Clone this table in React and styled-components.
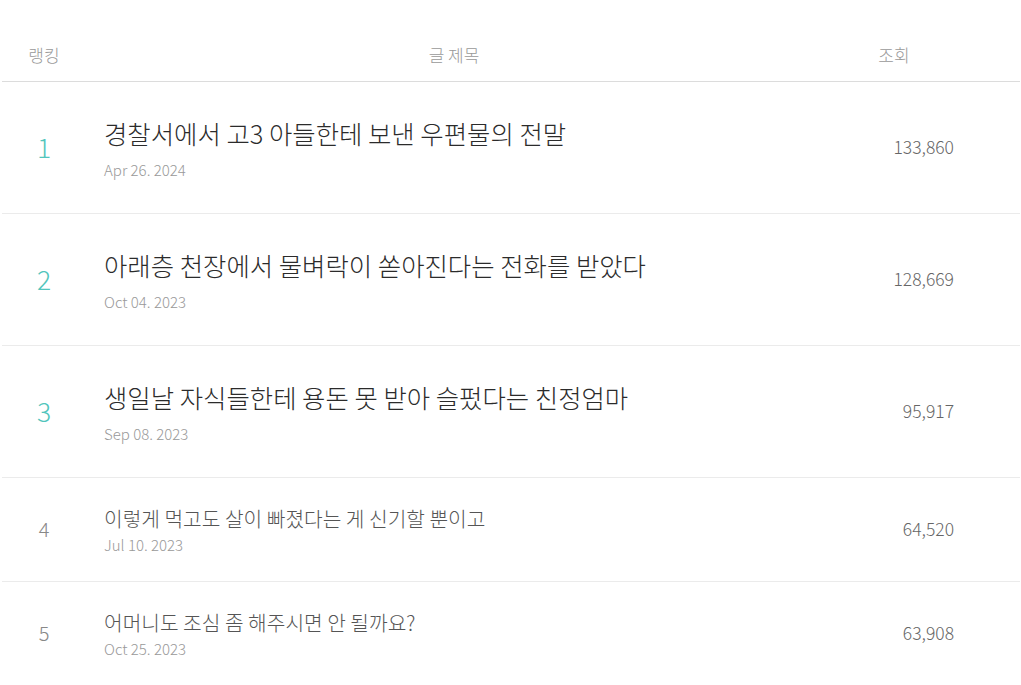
import React from 'react'
import styled, {createGlobalStyle} from 'styled-components'

const GlobalStyle = createGlobalStyle`
  html, body {
    margin: 0;
    padding: 0;
    background: #fff;
  }
  body {
    font-family: "Noto Sans CJK KR", "Noto Sans", sans-serif;
    font-weight: 300;
    color: #333;
  }
`

const Board = styled.div`
  padding: 28px 1px 0 2px;
`

const cols = `
  display: grid;
  grid-template-columns: 84px 1fr 120px 66px;
  align-items: center;
`

const HeadRow = styled.div`
  ${cols}
  height: 53px;
  border-bottom: 1px solid #dcdcdc;
  font-size: 17px;
  color: #999;
`

const HeadCell = styled.div`
  text-align: center;
  padding-right: ${p => p.$shift || 0}px;
`

const Row = styled.div`
  ${cols}
  height: ${p => (p.$top ? 131 : 103)}px;
  border-bottom: 1px solid #ebebeb;
`

const Rank = styled.div`
  text-align: center;
  font-size: ${p => (p.$top ? 26.5 : 20)}px;
  color: ${p => (p.$top ? '#52c5bc' : '#888')};
  margin-top: -2px;
`

const TitleCell = styled.div`
  padding-left: 18px;
  display: flex;
  flex-direction: column;
`

const Title = styled.div`
  font-size: ${p => (p.$top ? 25.4 : 20.3)}px;
  line-height: ${p => (p.$top ? 36 : 26)}px;
  color: ${p => (p.$top ? '#2b2b2b' : '#555')};
  margin-bottom: ${p => (p.$top ? 9 : 4)}px;
`

const Date = styled.div`
  font-size: 15px;
  line-height: 20px;
  color: #999;
`

const Views = styled.div`
  text-align: right;
  font-size: 17.5px;
  color: #666;
  margin-top: -2px;
`

const posts = [
  {rank: 1, title: '경찰서에서 고3 아들한테 보낸 우편물의 전말', date: 'Apr 26. 2024', views: '133,860'},
  {rank: 2, title: '아래층 천장에서 물벼락이 쏟아진다는 전화를 받았다', date: 'Oct 04. 2023', views: '128,669'},
  {rank: 3, title: '생일날 자식들한테 용돈 못 받아 슬펐다는 친정엄마', date: 'Sep 08. 2023', views: '95,917'},
  {rank: 4, title: '이렇게 먹고도 살이 빠졌다는 게 신기할 뿐이고', date: 'Jul 10. 2023', views: '64,520'},
  {rank: 5, title: '어머니도 조심 좀 해주시면 안 될까요?', date: 'Oct 25. 2023', views: '63,908'},
]

export default function App() {
  return (
    <>
      <GlobalStyle/>
      <Board>
        <HeadRow>
          <HeadCell>랭킹</HeadCell>
          <HeadCell $shift={12}>글 제목</HeadCell>
          <HeadCell>조회</HeadCell>
        </HeadRow>
        {posts.map(p => {
          const top = p.rank <= 3
          return (
            <Row key={p.rank} $top={top}>
              <Rank $top={top}>{p.rank}</Rank>
              <TitleCell>
                <Title $top={top}>{p.title}</Title>
                <Date>{p.date}</Date>
              </TitleCell>
              <Views>{p.views}</Views>
            </Row>
          )
        })}
      </Board>
    </>
  )
}
